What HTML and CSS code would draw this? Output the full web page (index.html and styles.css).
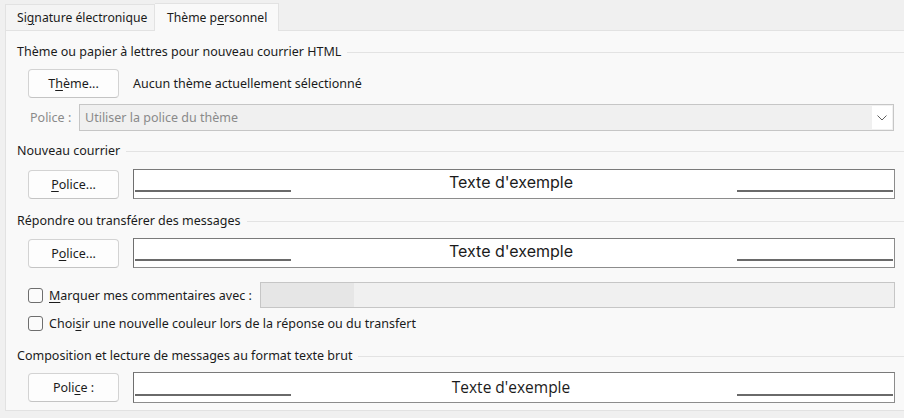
FILE: index.html
```html
<!DOCTYPE html>
<html lang="fr">
<head>
<meta charset="utf-8">
<title>Thème personnel</title>
<link rel="stylesheet" href="styles.css">
</head>
<body>
<div class="window">
  <div class="tabs">
    <div class="tab">Si<u>g</u>nature électronique</div>
    <div class="tab active">Thème p<u>e</u>rsonnel</div>
  </div>
  <div class="panel">
    <div class="group g1"><span>Thème ou papier à lettres pour nouveau courrier HTML</span><i class="rule"></i></div>
    <div class="row r1">
      <button class="btn">T<u>h</u>ème...</button>
      <span class="info">Aucun thème actuellement sélectionné</span>
    </div>
    <div class="row r2">
      <span class="lbl">Police :</span>
      <div class="select">
        <span>Utiliser la police du thème</span>
        <span class="drop"><svg width="10" height="6" viewBox="0 0 10 6"><path d="M0.5 0.5 L5 5 L9.5 0.5" fill="none" stroke="#606060" stroke-width="1"/></svg></span>
      </div>
    </div>

    <div class="group g2"><span>Nouveau courrier</span><i class="rule"></i></div>
    <div class="row r3">
      <button class="btn"><u>P</u>olice...</button>
      <div class="preview"><i class="ln"></i><span class="sample">Texte d'exemple</span><i class="ln"></i></div>
    </div>

    <div class="group g3"><span>Répondre ou transférer des messages</span><i class="rule"></i></div>
    <div class="row r3 r5">
      <button class="btn">P<u>o</u>lice...</button>
      <div class="preview"><i class="ln"></i><span class="sample">Texte d'exemple</span><i class="ln"></i></div>
    </div>

    <div class="row chk c1">
      <span class="box"></span>
      <span class="clbl"><u>M</u>arquer mes commentaires avec :</span>
      <div class="mark"><span class="markfill"></span></div>
    </div>
    <div class="row chk c2">
      <span class="box"></span>
      <span class="clbl">Choi<u>s</u>ir une nouvelle couleur lors de la réponse ou du transfert</span>
    </div>

    <div class="group g4"><span>Composition et lecture de messages au format texte brut</span><i class="rule"></i></div>
    <div class="row r3 r7">
      <button class="btn">Poli<u>c</u>e :</button>
      <div class="preview plain"><i class="ln"></i><span class="sample">Texte d'exemple</span><i class="ln"></i></div>
    </div>
  </div>
</div>
</body>
</html>
```
FILE: styles.css
```css
* { box-sizing: border-box; }
html, body { margin: 0; padding: 0; }
body {
  width: 904px;
  height: 418px;
  overflow: hidden;
  background: #f0f0f0;
  font-family: "Noto Sans", "Open Sans", sans-serif;
  font-size: 12.5px;
  color: #1b1b1b;
}
u { text-decoration: underline; text-underline-offset: 2px; }
.window { height: 418px; padding-top: 3px; }
.tabs { display: flex; height: 27px; padding-left: 5px; align-items: flex-end; }
.tab {
  height: 26px;
  padding: 0 0 0 11px;
  line-height: 25px;
  background: #f4f4f4;
  border: 1px solid #e2e2e2;
  border-bottom: none;
  font-size: 12.2px;
  color: #1b1b1b;
  width: 150px;
  white-space: nowrap;
}
.tab.active {
  height: 28px;
  margin-bottom: -1px;
  background: #f9f9f9;
  border-left: none;
  width: 124px;
  line-height: 27px;
  padding-left: 12px;
  position: relative;
  z-index: 1;
}
.panel {
  margin-left: 5px;
  height: 381px;
  background: #f9f9f9;
  border: 1px solid #e2e2e2;
  border-right: none;
  padding: 0 0 0 11px;
}
.group { display: flex; align-items: center; height: 16px; line-height: 16px; white-space: nowrap; }
.rule { flex: 1; border-top: 1px solid #e3e3e3; margin-left: 6px; }
.g1 { margin-top: 13px; }
.g2 { margin-top: 12px; }
.g3 { margin-top: 14px; }
.g4 { margin-top: 17px; }
.row { display: flex; align-items: center; padding-left: 11px; padding-right: 9px; }
.r1 { margin-top: 9px; height: 29px; }
.btn {
  width: 91px;
  height: 29px;
  background: #fdfdfd;
  border: 1px solid #d3d3d3;
  border-bottom-color: #c4c4c4;
  border-radius: 4px;
  font: inherit;
  color: #1b1b1b;
  padding: 0;
  flex: none;
}
.info { margin-left: 14px; }
.r2 { margin-top: 6px; height: 27px; padding-left: 13px; padding-right: 10px; }
.lbl { color: #8a8a8a; width: 49px; flex: none; }
.select {
  flex: 1;
  height: 27px;
  background: #f0f0f0;
  border: 1px solid #c6c6c6;
  display: flex;
  align-items: center;
  padding-left: 5px;
  color: #8a8a8a;
}
.select span:first-child { flex: 1; }
.drop {
  width: 20px;
  height: 23px;
  margin-right: 1px;
  background: #ffffff;
  display: flex;
  align-items: center;
  justify-content: center;
}
.r3 { margin-top: 10px; height: 30px; }
.r5 { margin-top: 9px; }
.preview {
  flex: 1;
  margin-left: 14px;
  height: 30px;
  background: #ffffff;
  border: 1px solid #8c8c8c;
  border-left-color: #6f6f6f;
  border-top-color: #7a7a7a;
  display: flex;
  align-items: flex-end;
  justify-content: space-between;
  padding: 0 1px 6px 1px;
}
.ln { width: 156px; height: 0; border-bottom: 2px solid #6a6a6a; display: block; }
.sample {
  font-family: "Inter", "Roboto", sans-serif;
  font-size: 16px;
  line-height: 20px;
  color: #1b1b1b;
  align-self: center;
  margin-top: 2px;
  margin-right: 6px;
}
.chk { padding-left: 11px; }
.c1 { margin-top: 14px; height: 26px; }
.c2 { margin-top: 7px; height: 16px; }
.box {
  width: 15px;
  height: 15px;
  border: 1px solid #6e6e6e;
  border-radius: 3px;
  background: #fbfbfb;
  flex: none;
}
.clbl { margin-left: 6px; white-space: nowrap; }
.c1 .clbl { width: 211px; flex: none; }
.mark {
  flex: 1;
  height: 26px;
  border: 1px solid #c6c6c6;
  background: #f0f0f0;
  display: flex;
  padding-right: 10px;
}
.markfill { width: 93px; background: #e6e6e6; }
.r7 { margin-top: 8px; height: 31px; }
.r7 .btn { height: 29px; }
.plain { height: 31px; }
.plain .sample { font-family: "Open Sans", "Noto Sans", sans-serif; font-size: 15.5px; margin-top: 4px; }
```
